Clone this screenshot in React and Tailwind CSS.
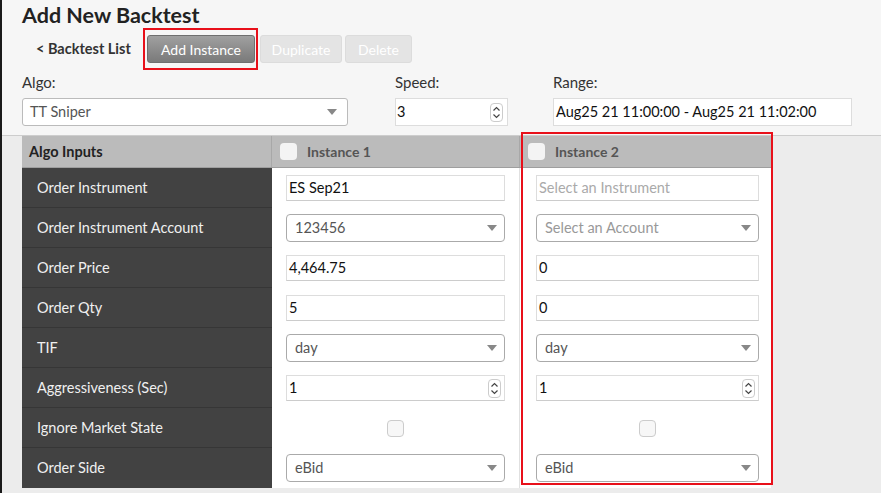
import React from "react";

const Caret = () => (
  <svg width="10" height="6" viewBox="0 0 10 6" className="shrink-0">
    <path d="M0 0 L10 0 L5 6 Z" fill="#888" />
  </svg>
);

const Spinner = () => (
  <div className="w-[13px] h-[19px] rounded-[4px] border border-[#ccc] bg-white flex flex-col items-center justify-center shrink-0">
    <svg width="9" height="15" viewBox="0 0 9 15">
      <path d="M1.5 5.5 L4.5 2.5 L7.5 5.5" fill="none" stroke="#444" strokeWidth="1.2" />
      <path d="M1.5 9.5 L4.5 12.5 L7.5 9.5" fill="none" stroke="#444" strokeWidth="1.2" />
    </svg>
  </div>
);

const TextBox = ({ value, placeholder }) => (
  <div className="h-[26px] w-full bg-white border border-[#ddd] border-b-[#ccc] flex items-center px-[2px] text-[14.5px]">
    {value ? <span className="text-[#111]">{value}</span> : <span className="text-[#aaa]">{placeholder}</span>}
  </div>
);

const NumBox = ({ value }) => (
  <div className="h-[26px] w-full bg-white border border-[#ddd] border-b-[#ccc] flex items-center justify-between pl-[2px] pr-[3px] text-[14.5px] text-[#111]">
    <span>{value}</span>
    <Spinner />
  </div>
);

const SelectBox = ({ value, placeholder }) => (
  <div className="h-[28px] w-full bg-white border border-[#aaa] rounded-[4px] flex items-center justify-between pl-[8px] pr-[7px] text-[14.5px]">
    {value ? <span className="text-[#555]">{value}</span> : <span className="text-[#999]">{placeholder}</span>}
    <Caret />
  </div>
);

const rows = [
  { label: "Order Instrument", a: <TextBox value="ES Sep21" />, b: <TextBox placeholder="Select an Instrument" /> },
  { label: "Order Instrument Account", a: <SelectBox value="123456" />, b: <SelectBox placeholder="Select an Account" /> },
  { label: "Order Price", a: <TextBox value="4,464.75" />, b: <TextBox value="0" /> },
  { label: "Order Qty", a: <TextBox value="5" />, b: <TextBox value="0" /> },
  { label: "TIF", a: <SelectBox value="day" />, b: <SelectBox value="day" /> },
  { label: "Aggressiveness (Sec)", a: <NumBox value="1" />, b: <NumBox value="1" /> },
  { label: "Ignore Market State", check: true },
  { label: "Order Side", a: <SelectBox value="eBid" />, b: <SelectBox value="eBid" /> },
];

const Check = () => (
  <div className="w-[17px] h-[17px] rounded-[4px] border border-[#ccc] bg-[#f7f7f7]" />
);

const HeadCheck = () => (
  <div className="w-[17px] h-[17px] rounded-[4px] bg-[#f4f4f4]" />
);

export default function App() {
  return (
    <div
      className="w-[881px] h-[493px] overflow-hidden bg-[#f6f6f6] border-l-2 border-[#1a1a1a] flex flex-col"
      style={{ fontFamily: "Lato, 'Open Sans', sans-serif" }}
    >
      <div className="pl-[20px]">
        <h1 className="text-[21.5px] font-bold text-[#222] leading-[30px]">Add New Backtest</h1>
        <div className="flex items-center h-[28px] mt-[5px]">
          <span className="ml-[14px] text-[14.5px] font-bold text-[#333] w-[111px]">&lt; Backtest List</span>
          <div className="relative">
            <span className="absolute -left-[4px] -right-[3px] -top-[7px] -bottom-[7px] border-2 border-[#e8101a]" />
            <button className="h-[28px] w-[108px] rounded-[3px] border border-[#6f6f6f] bg-gradient-to-b from-[#a0a0a0] to-[#7a7a7a] text-white text-[14px]">
              Add Instance
            </button>
          </div>
          <button className="ml-[5px] h-[28px] w-[82px] rounded-[3px] border border-[#dcdcdc] bg-[#e4e4e4] text-white text-[14px]">
            Duplicate
          </button>
          <button className="ml-[3px] h-[28px] w-[67px] rounded-[3px] border border-[#dcdcdc] bg-[#e4e4e4] text-white text-[14px]">
            Delete
          </button>
        </div>
        <div className="flex mt-[8px] text-[14.5px] text-[#333]">
          <div className="w-[326px]">
            <div className="h-[22px] leading-[22px] text-[15px]">Algo:</div>
            <div className="mt-[5px] h-[28px] bg-white border border-[#bbb] rounded-[3px] flex items-center justify-between pl-[7px] pr-[10px] text-[#555]">
              <span>TT Sniper</span>
              <Caret />
            </div>
          </div>
          <div className="w-[113px] ml-[47px]">
            <div className="h-[22px] leading-[22px] text-[15px]">Speed:</div>
            <div className="mt-[5px] h-[28px] bg-white border border-[#ddd] flex items-center justify-between pl-[1px] pr-[4px] text-[#111]">
              <span>3</span>
              <Spinner />
            </div>
          </div>
          <div className="w-[299px] ml-[45px]">
            <div className="h-[22px] leading-[22px] text-[15px]">Range:</div>
            <div className="mt-[5px] h-[28px] bg-white border border-[#ddd] flex items-center pl-[2px] text-[#111]">
              Aug25 21 11:00:00 - Aug25 21 11:02:00
            </div>
          </div>
        </div>
      </div>

      <div className="mt-[9px] border-t border-[#cdcdcd] bg-[#ececec] flex-1 pl-[20px]">
        <div className="relative w-[749px]">
          <span className="absolute left-[499px] w-[252px] -top-[4px] h-[353px] border-2 border-[#e8101a] z-10" />
          <div className="grid grid-cols-[250px_248px_251px] h-[32px] bg-[#bbbbbb] border-b border-[#9e9e9e]">
            <div className="flex items-center pl-[7px] text-[14.5px] font-bold text-[#222] border-r border-[#a8a8a8]">
              Algo Inputs
            </div>
            <div className="flex items-center pl-[8px] gap-[10px] text-[14px] font-bold text-[#555] border-r border-[#a8a8a8]">
              <HeadCheck />
              <span>Instance 1</span>
            </div>
            <div className="flex items-center pl-[8px] gap-[10px] text-[14px] font-bold text-[#555]">
              <HeadCheck />
              <span>Instance 2</span>
            </div>
          </div>
          <div className="grid grid-cols-[250px_248px_251px]">
            <div className="bg-[#424242]">
              {rows.map((r, i) => (
                <div
                  key={i}
                  className={
                    "h-[40px] flex items-center pl-[15px] text-[14.5px] text-[#f0f0f0] " +
                    (i < rows.length - 1 ? "border-b border-[#363636]" : "")
                  }
                >
                  {r.label}
                </div>
              ))}
            </div>
            <div className="bg-white border-r border-[#e0e0e0]">
              {rows.map((r, i) => (
                <div key={i} className="h-[40px] flex items-center justify-center px-[14px]">
                  {r.check ? <Check /> : r.a}
                </div>
              ))}
            </div>
            <div className="bg-white">
              {rows.map((r, i) => (
                <div key={i} className="h-[40px] flex items-center justify-center pl-[16px] pr-[12px]">
                  {r.check ? <Check /> : r.b}
                </div>
              ))}
            </div>
          </div>
        </div>
      </div>
    </div>
  );
}
